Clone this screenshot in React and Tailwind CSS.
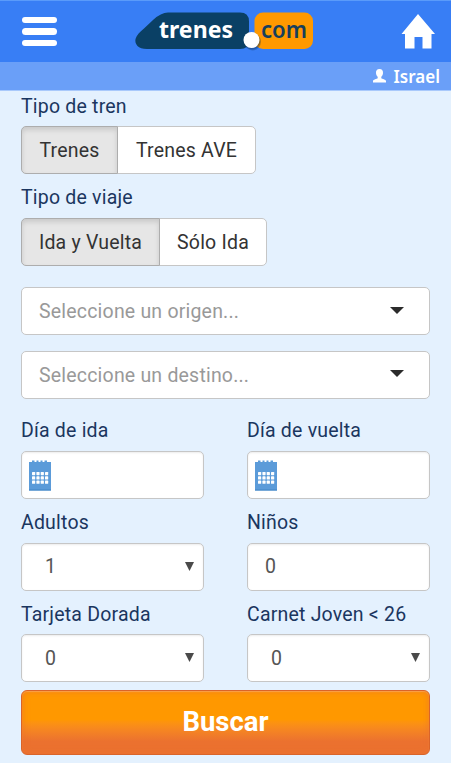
import React, { useState } from "react";
import clsx from "clsx";

const Logo = () => (
  <svg
    className="h-[46px] w-[184px]"
    viewBox="0 0 184 46"
    role="img"
    aria-label="trenes.com"
  >
    <path
      d="M35 3.5H107Q116 3.5 116 12.5V31Q116 40 107 40H14C5 40 1.5 35 2.5 30C3.5 26 7 23 11 19.5L20 11Q28 3.5 35 3.5Z"
      fill="#0a4065"
    />
    <rect x="121.5" y="3.5" width="58.5" height="36.5" rx="8.5" fill="#ff9900" />
    <circle cx="119.5" cy="33" r="8.5" fill="#0a2f50" opacity="0.25" />
    <circle cx="119" cy="32" r="8.5" fill="#0a2f50" opacity="0.3" />
    <circle cx="118.5" cy="31" r="8" fill="#ffffff" />
    <text
      x="26"
      y="29"
      textLength="74"
      lengthAdjust="spacingAndGlyphs"
      className="font-['Noto_Sans',sans-serif] text-[22.5px] font-bold"
      fill="#ffffff"
    >
      trenes
    </text>
    <text
      x="128"
      y="28.5"
      textLength="46"
      lengthAdjust="spacingAndGlyphs"
      className="font-['Noto_Sans',sans-serif] text-[23px] font-semibold"
      fill="#173f5c"
    >
      com
    </text>
  </svg>
);

const HomeIcon = () => (
  <svg className="h-[36px] w-[34px]" viewBox="0 0 34 36" fill="#ffffff">
    <path d="M17 0L34 20H30.5V34.5H21.5V23H13.5V34.5H4V20H0.5Z" />
  </svg>
);

const UserIcon = () => (
  <svg className="h-[14px] w-[13px]" viewBox="0 0 13 14" fill="#ffffff">
    <path d="M6.5 0C9.2 0 10.2 1.8 10 4.2C9.8 6 9 7 8.3 7.8V9.2C9 10.2 13 10.2 13 12V13.5H0V12C0 10.2 4 10.2 4.7 9.2V7.8C4 7 3.2 6 3 4.2C2.8 1.8 3.8 0 6.5 0Z" />
  </svg>
);

const CalendarIcon = () => (
  <svg className="h-[31px] w-[22px]" viewBox="0 0 22 31">
    <path
      d="M0 2H3V0.5H5.5V2H7.5V0.5H9.5V2H11.5V0.5H13.5V2H15.5V0.5H18V2H22V30.5H0Z"
      fill="#5b9bd9"
    />
    <path d="M0 29.5H22V30.5H0Z" fill="#4384c5" />
    {[12, 16.3, 20.6].map((y) =>
      [3, 7.4, 11.7, 16].map((x) => (
        <rect
          key={`${x}-${y}`}
          x={x}
          y={y}
          width="3.2"
          height="3.2"
          rx="0.6"
          fill="#ffffff"
        />
      )),
    )}
  </svg>
);

const Label = ({ children }) => (
  <div className="h-[43.8px] pt-[10px] text-[19.5px] leading-7 tracking-[0.2px] text-[#1b365f]">
    {children}
  </div>
);

const Box = ({ className, children }) => (
  <div
    className={clsx(
      "flex h-12 items-center rounded-[5px] border border-[#c6c6c6] bg-white pt-px text-[19.5px] tracking-[0.2px]",
      className,
    )}
  >
    {children}
  </div>
);

const Toggle = ({ options }) => {
  const [active, setActive] = useState(0);

  return (
    <div className="flex h-12">
      {options.map((option, i) => (
        <button
          key={option.label}
          onClick={() => setActive(i)}
          className={clsx(
            "border pt-px text-[19.5px] tracking-[0.2px] text-[#333333]",
            option.width,
            i === 0 ? "rounded-l-[5px]" : "-ml-px rounded-r-[5px]",
            active === i
              ? "relative border-[#adadad] bg-[#e6e6e6] shadow-[inset_0_3px_5px_rgba(0,0,0,0.125)]"
              : "border-[#c6c6c6] bg-white",
          )}
        >
          {option.label}
        </button>
      ))}
    </div>
  );
};

const CitySelect = ({ placeholder }) => (
  <Box className="justify-between pr-[25px] pl-[17px] text-[#999999]">
    {placeholder}
    <svg className="mb-[3px] h-[7px] w-[14px]" viewBox="0 0 14 7" fill="#2b2b2b">
      <path d="M0 0H14L7 7Z" />
    </svg>
  </Box>
);

const NumberSelect = ({ value }) => (
  <Box className="justify-between pr-[9px] pl-[23px] text-[#555555] shadow-[inset_0_1px_2px_rgba(0,0,0,0.075)]">
    {value}
    <svg className="mb-[2px] h-[9px] w-[9px]" viewBox="0 0 9 9" fill="#4a4a4a">
      <path d="M0 0H9L4.5 9Z" />
    </svg>
  </Box>
);

const DateField = () => (
  <Box className="pl-[7px] shadow-[inset_0_1px_2px_rgba(0,0,0,0.075)]">
    <CalendarIcon />
  </Box>
);

const App = () => (
  <div className="h-[763px] w-[451px] overflow-hidden bg-[#e4f1fe] font-[Roboto,sans-serif]">
    <header className="flex h-[62px] items-center border-t border-[#5a9bfa] bg-[#387ef5] pr-[16px] pl-[22px]">
      <div className="mr-[76px] flex w-[35px] flex-col gap-[5px]">
        <span className="h-[6.5px] rounded-full bg-white" />
        <span className="h-[6.5px] rounded-full bg-white" />
        <span className="h-[6.5px] rounded-full bg-white" />
      </div>
      <Logo />
      <div className="ml-auto">
        <HomeIcon />
      </div>
    </header>

    <div className="flex h-[28.5px] items-center justify-end gap-[8px] border-b border-[#a9c9fb] bg-[#6a9ff8] pr-[11px] text-white">
      <UserIcon />
      <span className="pt-px font-['Noto_Sans',sans-serif] text-[17px] font-semibold">
        Israel
      </span>
    </div>

    <main className="px-[21px]">
      <div className="-mt-2">
        <Label>Tipo de tren</Label>
        <Toggle
          options={[
            { label: "Trenes", width: "w-[97px]" },
            { label: "Trenes AVE", width: "w-[139px]" },
          ]}
        />
        <Label>Tipo de viaje</Label>
        <Toggle
          options={[
            { label: "Ida y Vuelta", width: "w-[139px]" },
            { label: "Sólo Ida", width: "w-[108px]" },
          ]}
        />
      </div>

      <div className="mt-[21.4px] flex flex-col gap-[15.5px]">
        <CitySelect placeholder="Seleccione un origen..." />
        <CitySelect placeholder="Seleccione un destino..." />
      </div>

      <div className="mt-2 grid grid-cols-2 gap-x-[43px]">
        <div>
          <Label>Día de ida</Label>
          <DateField />
        </div>
        <div>
          <Label>Día de vuelta</Label>
          <DateField />
        </div>
        <div>
          <Label>Adultos</Label>
          <NumberSelect value="1" />
        </div>
        <div>
          <Label>Niños</Label>
          <Box className="pl-[17px] text-[#555555] shadow-[inset_0_1px_2px_rgba(0,0,0,0.075)]">
            0
          </Box>
        </div>
        <div>
          <Label>Tarjeta Dorada</Label>
          <NumberSelect value="0" />
        </div>
        <div>
          <Label>Carnet Joven &lt; 26</Label>
          <NumberSelect value="0" />
        </div>
      </div>

      <button className="mt-2 h-[65px] w-full rounded-[6px] border border-[#d9642a] bg-linear-to-b from-[#ff9800] from-45% to-[#eb712f] to-80% pb-[3px] text-[27.5px] font-bold text-white shadow-[inset_0_0_7px_rgba(235,113,47,0.7),inset_0_1px_1px_rgba(255,190,110,0.8)]">
        Buscar
      </button>
    </main>
  </div>
);

export default App;
